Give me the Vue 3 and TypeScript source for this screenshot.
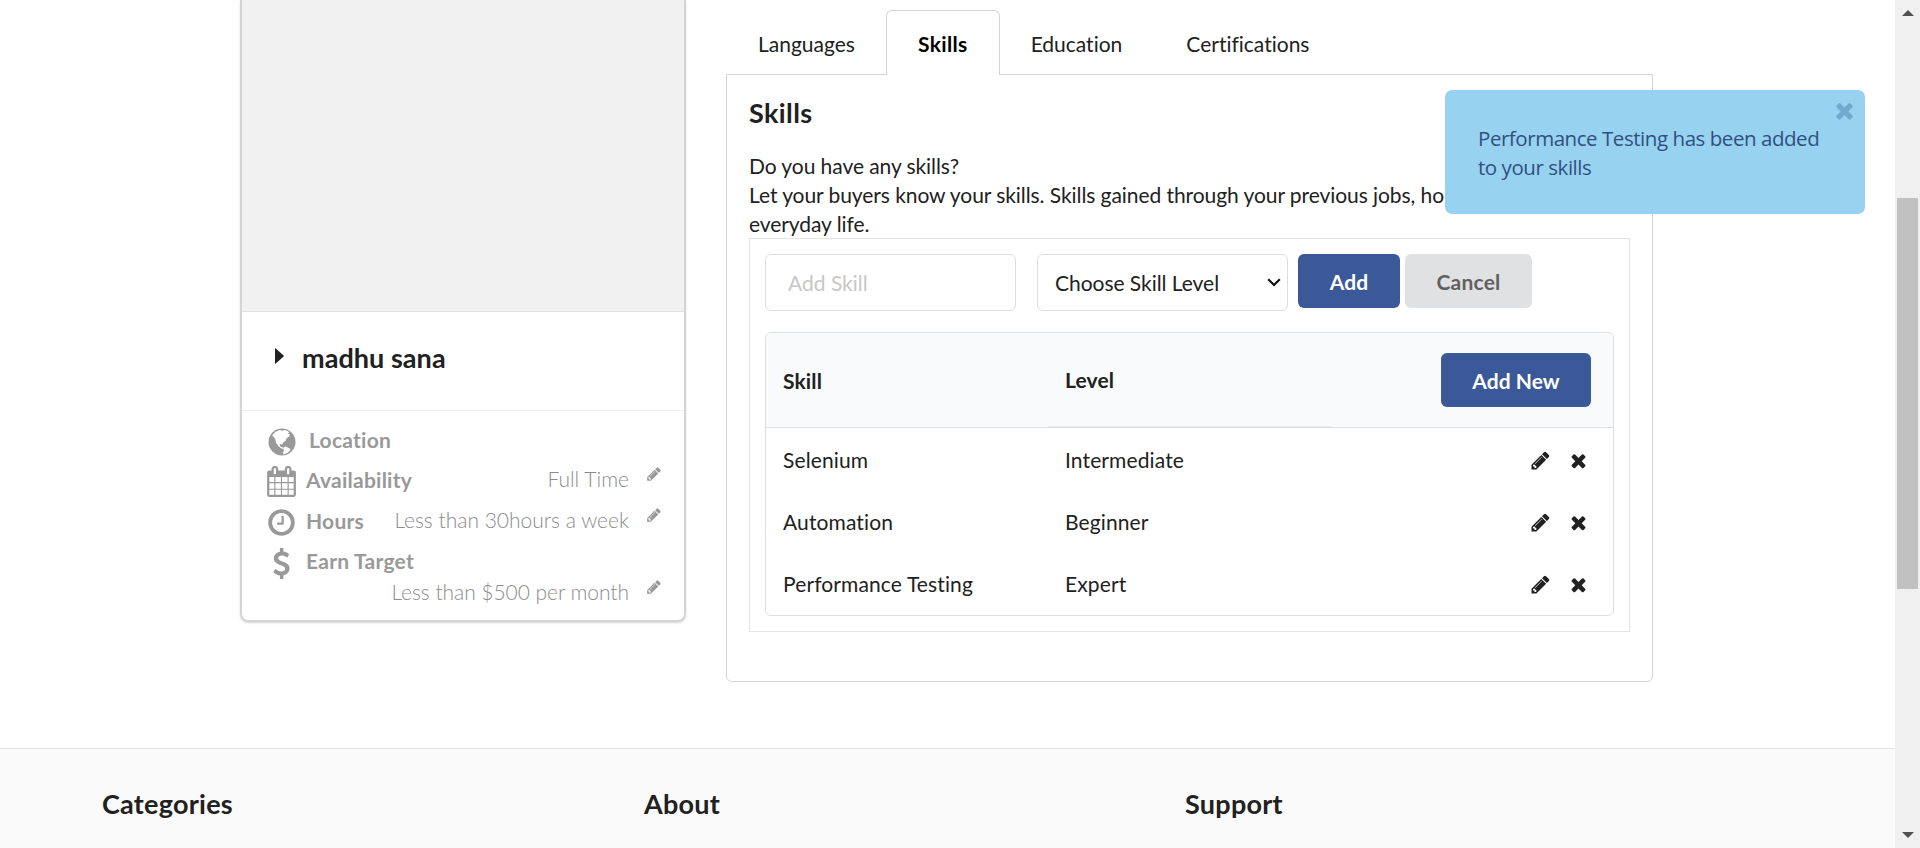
<script setup lang="ts">
import { ref } from 'vue'

interface Skill { name: string; level: string }

const ICONS = {
  pencil: 'M491 1536l91-91-235-235-91 91v107h128v128h107zm523-928q0-22-22-22-10 0-17 7l-542 542q-7 7-7 17 0 22 22 22 10 0 17-7l542-542q7-7 7-17zm-54-192l416 416-832 832h-416v-416zm683 96q0 53-37 90l-166 166-416-416 166-165q36-38 90-38 53 0 91 38l235 234q37 39 37 91z',
  close: 'M1490 1322q0 40-28 68l-136 136q-28 28-68 28t-68-28l-294-294-294 294q-28 28-68 28t-68-28l-136-136q-28-28-28-68t28-68l294-294-294-294q-28-28-28-68t28-68l136-136q28-28 68-28t68 28l294 294 294-294q28-28 68-28t68 28l136 136q28 28 28 68t-28 68l-294 294 294 294q28 28 28 68z',
  calendar: 'M192 1664h288v-288h-288v288zm352 0h320v-288h-320v288zm-352-352h288v-320h-288v320zm352 0h320v-320h-320v320zm-352-384h288v-288h-288v288zm736 736h320v-288h-320v288zm-384-736h320v-288h-320v288zm768 736h288v-288h-288v288zm-384-352h320v-320h-320v320zm-352-864v-288q0-13-9.5-22.5t-22.5-9.5h-64q-13 0-22.5 9.5t-9.5 22.5v288q0 13 9.5 22.5t22.5 9.5h64q13 0 22.5-9.5t9.5-22.5zm736 864h288v-320h-288v320zm-384-384h320v-288h-320v288zm384 0h288v-288h-288v288zm32-480v-288q0-13-9.5-22.5t-22.5-9.5h-64q-13 0-22.5 9.5t-9.5 22.5v288q0 13 9.5 22.5t22.5 9.5h64q13 0 22.5-9.5t9.5-22.5zm384-64v1280q0 52-38 90t-90 38h-1408q-52 0-90-38t-38-90v-1280q0-52 38-90t90-38h128v-96q0-66 47-113t113-47h64q66 0 113 47t47 113v96h384v-96q0-66 47-113t113-47h64q66 0 113 47t47 113v96h128q52 0 90 38t38 90z',
  clock: 'M1024 544v448q0 14-9 23t-23 9h-320q-14 0-23-9t-9-23v-64q0-14 9-23t23-9h224v-352q0-14 9-23t23-9h64q14 0 23 9t9 23zm416 352q0-148-73-273t-198-198-273-73-273 73-198 198-73 273 73 273 198 198 273 73 273-73 198-198 73-273zm224 0q0 209-103 385.5t-279.5 279.5-385.5 103-385.5-103-279.5-279.5-103-385.5 103-385.5 279.5-279.5 385.5-103 385.5 103 279.5 279.5 103 385.5z',
  dollar: 'M1362 1185q0 153-99.5 263.5t-258.5 136.5v175q0 14-9 23t-23 9h-135q-13 0-22.5-9.5t-9.5-22.5v-175q-66-9-127.5-31t-101.5-44.5-74-48-46.5-37.5-17.5-18q-17-21-2-41l103-135q7-10 23-12 15-2 24 9l2 2q113 99 243 125 37 8 74 8 81 0 142.5-43t61.5-122q0-28-15-53t-33.5-42-58.5-37.5-66-32-80-32.5q-39-16-61.5-25t-61.5-26.5-62.5-31-56.5-35.5-53.5-42.5-43.5-49-35.5-58-21-66.5-8.5-78q0-138 98-242t255-134v-180q0-13 9.5-22.5t22.5-9.5h135q14 0 23 9t9 23v176q57 6 110.5 23t87 33.5 63.5 37.5 39 29 15 14q17 18 5 38l-81 146q-8 15-23 16-14 3-27-7-3-3-14.5-12t-39-26.5-58.5-32-74.5-26-85.5-11.5q-95 0-155 43t-60 111q0 26 8.5 48t29.5 41.5 39.5 33 56 31 60.5 27 70 27.5q53 20 81 31.5t76 35 75.5 42.5 62 50 53 63.5 31.5 76.5 13 94z',
}

const tabs = ['Languages', 'Skills', 'Education', 'Certifications']
const activeTab = ref('Skills')
const newSkill = ref('')
const newLevel = ref('')
const noticeOpen = ref(true)
const skills = ref<Skill[]>([
  { name: 'Selenium', level: 'Intermediate' },
  { name: 'Automation', level: 'Beginner' },
  { name: 'Performance Testing', level: 'Expert' },
])
const levels = ['Beginner', 'Intermediate', 'Expert']
const footer = ['Categories', 'About', 'Support']

function addSkill() {
  if (newSkill.value && newLevel.value) skills.value.push({ name: newSkill.value, level: newLevel.value })
}
function removeSkill(i: number) {
  skills.value.splice(i, 1)
}
</script>

<template>
  <div class="window">
    <div class="page">
      <main class="content">
        <aside class="card">
          <div class="photo"></div>
          <div class="owner">
            <svg class="caret" viewBox="0 0 9 16"><path d="M0 0.6Q0 0 .8 .5L8.6 7.4Q9 8 8.6 8.6L.8 15.5Q0 16 0 15.4Z" /></svg>
            <span>madhu sana</span>
          </div>
          <div class="facts">
            <div class="fact location">
              <svg class="lead" viewBox="0 0 28 28">
                <circle cx="14" cy="14" r="13.5" />
                <path class="land" d="M4.2 7.2L8 3.5l4-1.4 2.6.6 1.6-.7 3 .8 2.2 1.4-1.4 1.2 2 1.2-1 2.2-2.4 1.3-.7 2.4-2.6 1.7-1.1 2.2-1.8-.5-.8 1.8 1.6 1.4 1.7.4.3 1.5-2.2-.7-2.7-2.2-2.2-3.4-.9-3.6zM15.6 19.2l2.1-.7 2.6 1.2 2.2 1.3-.6 1.5-2.2 2.2-4.3 1.7-.4-2.1 1.1-1.8-.9-1.6z" />
              </svg>
              <strong>Location</strong>
            </div>
            <div class="fact">
              <svg class="lead" viewBox="0 0 1792 1792"><path :d="ICONS.calendar" /></svg>
              <strong>Availability</strong>
              <span class="value">Full Time</span>
              <svg class="edit" viewBox="0 0 1792 1792"><path :d="ICONS.pencil" /></svg>
            </div>
            <div class="fact">
              <svg class="lead" viewBox="0 0 1792 1792"><path :d="ICONS.clock" /></svg>
              <strong>Hours</strong>
              <span class="value">Less than 30hours a week</span>
              <svg class="edit" viewBox="0 0 1792 1792"><path :d="ICONS.pencil" /></svg>
            </div>
            <div class="fact earn">
              <svg class="lead" viewBox="0 0 1792 1792"><path :d="ICONS.dollar" /></svg>
              <strong>Earn Target</strong>
            </div>
            <div class="fact target">
              <span class="value">Less than $500 per month</span>
              <svg class="edit" viewBox="0 0 1792 1792"><path :d="ICONS.pencil" /></svg>
            </div>
          </div>
        </aside>

        <section class="profile">
          <nav class="tabs">
            <a v-for="t in tabs" :key="t" :class="['tab', { active: t === activeTab }]" @click="activeTab = t">{{ t }}</a>
          </nav>
          <div class="panel">
            <h3>Skills</h3>
            <p>Do you have any skills?<br />Let your buyers know your skills. Skills gained through your previous jobs, hobbies and even everyday life.</p>
            <div class="frame">
              <div class="form">
                <input v-model="newSkill" type="text" placeholder="Add Skill" />
                <div class="choose">
                  <select v-model="newLevel">
                    <option value="">Choose Skill Level</option>
                    <option v-for="l in levels" :key="l">{{ l }}</option>
                  </select>
                  <svg viewBox="0 0 14 9"><path d="M1.2 1.2L7 7l5.8-5.8" /></svg>
                </div>
                <button class="btn add" @click="addSkill">Add</button>
                <button class="btn cancel">Cancel</button>
              </div>
              <div class="table">
                <div class="row head">
                  <span>Skill</span><span class="level">Level</span>
                  <div class="last"><button class="btn add-new">Add New</button></div>
                </div>
                <div v-for="(s, i) in skills" :key="s.name" class="row">
                  <span>{{ s.name }}</span><span>{{ s.level }}</span>
                  <div class="last actions">
                    <svg class="pen" viewBox="0 0 1792 1792"><path :d="ICONS.pencil" /></svg>
                    <svg class="del" viewBox="0 0 1792 1792" @click="removeSkill(i)"><path :d="ICONS.close" /></svg>
                  </div>
                </div>
              </div>
            </div>
          </div>
        </section>
      </main>
      <footer class="footer"><h3 v-for="f in footer" :key="f">{{ f }}</h3></footer>
    </div>
    <div class="scrollbar">
      <svg viewBox="0 0 12 6"><path d="M0 6L6 0l6 6z" /></svg>
      <div class="thumb"></div>
      <svg viewBox="0 0 12 6"><path d="M0 0l6 6 6-6z" /></svg>
    </div>
    <div v-if="noticeOpen" class="notice">
      <svg viewBox="0 0 1792 1792" @click="noticeOpen = false"><path :d="ICONS.close" /></svg>
      Performance Testing has been added to your skills
    </div>
  </div>
</template>

<style>
body { margin: 0; background: #fff; overflow: hidden; }
</style>

<style scoped>
* { box-sizing: border-box; }
.window { position: relative; display: flex; width: 1920px; height: 848px; overflow: hidden; font: 21px/29px Lato, "Open Sans", sans-serif; color: #212121; font-variant-ligatures: none; }
.page { width: 1895px; display: flex; flex-direction: column; }
.content { height: 748px; display: flex; align-items: flex-start; padding-left: 240px; }
h3 { margin: 0; font-weight: 700; letter-spacing: .25px; }
svg { fill: currentColor; flex: none; display: block; }

.card { width: 446px; height: 622px; border: 2px solid #d4d4d5; border-top: 0; border-radius: 0 0 8px 8px; box-shadow: 0 1px 2px #d4d4d5; color: #999; }
.photo { height: 312px; background: #f1f1f1; border-bottom: 1px solid #e1e1e1; }
.owner { height: 99px; border-bottom: 1px solid #efefef; display: flex; padding: 30px 0 0 33px; color: #212121; font-size: 27px; font-weight: 700; line-height: 32px; letter-spacing: .05px; }
.caret { width: 9px; height: 16px; margin: 6px 18px 0 0; }
.facts { padding: 10px 21px 0 24px; }
.fact { height: 41px; display: flex; align-items: flex-start; padding-top: 5px; }
.lead { width: 31px; height: 31px; margin: 1px 9px 0 0; }
.location { padding-top: 4px; height: 39px; }
.location .lead { width: 28px; height: 28px; margin: 3px 13px 0 2px; }
.fact strong { font-weight: 700; letter-spacing: .25px; }
.land { fill: #fff; }
.value { margin: -1px 0 0 auto; font-weight: 300; color: #8c8c8c; }
.edit { width: 16px; height: 16px; margin: 1px 1px 0 17px; }
.earn { height: 32px; }
.earn strong { margin-top: -1px; }
.target { padding-top: 4px; }
.target .value { letter-spacing: -.05px; }

.profile { width: 927px; margin-left: 40px; }
.tabs { display: flex; height: 75px; padding-top: 10px; margin-bottom: -1px; position: relative; }
.tab { padding: 19px 32px 0; height: 65px; }
.tab.active { border: 1px solid #d4d4d5; border-bottom: 0; border-radius: 6px 6px 0 0; background: #fff; color: #000; font-weight: 700; padding: 18px 31px 0; margin: 0 -1px; letter-spacing: .35px; }
.panel { height: 608px; border: 1px solid #d4d4d5; border-radius: 0 0 6px 6px; padding: 21px 22px 0; }
.panel h3 { font-size: 27px; line-height: 34px; letter-spacing: .4px; }
.panel p { margin: 21px 0 0; height: 87px; letter-spacing: -.07px; }
.frame { height: 394px; border: 1px solid #e3e4e5; padding: 15px; }
.form { display: flex; height: 78px; align-items: flex-start; }
input, select { width: 251px; height: 57px; border: 1px solid #dedede; border-radius: 6px; background: #fff; font: inherit; color: #212121; outline: 0; }
input { padding: 0 22px; margin-right: 21px; }
input::placeholder { color: #c7c7c7; opacity: 1; }
.choose { position: relative; margin-right: 10px; }
select { appearance: none; padding: 0 17px; display: block; letter-spacing: -.04px; }
.choose svg { position: absolute; right: 7px; top: 24px; width: 14px; height: 9px; fill: none; stroke: #111; stroke-width: 2.2; }
.btn { height: 54px; border: 0; border-radius: 6px; padding: 1px 0 0; background: #3b5998; color: #fff; font: 700 21px/53px Lato, sans-serif; letter-spacing: .05px; }
.add { width: 102px; margin-right: 5px; }
.cancel { width: 127px; background: #e0e1e2; color: #5f6061; letter-spacing: .2px; }
.table { height: 284px; border: 1px solid #dedfdf; border-radius: 6px; overflow: hidden; }
.row { display: grid; grid-template-columns: 282px 284px 1fr; height: 62px; align-items: center; letter-spacing: .12px; }
.row > span { padding-left: 17px; }
.head { height: 95px; background: #f9fafb; border-bottom: 1px solid #dedfdf; font-weight: 700; }
.head .level { align-self: stretch; line-height: 94px; box-shadow: inset 0 -1px #ebeced; }
.last { display: flex; justify-content: flex-end; padding-right: 22px; }
.add-new { width: 150px; }
.actions { padding: 2px 24px 0 0; }
.pen { width: 21px; height: 21px; margin-right: 17px; }
.del { width: 21px; height: 21px; }

.footer { height: 100px; background: #fafafa; border-top: 1px solid #e3e3e3; padding: 38px 0 0 102px; display: grid; grid-template-columns: 542px 541px 1fr; }
.footer h3 { font-size: 27px; line-height: 34px; }
.scrollbar { width: 25px; background: #f0f0f0; display: flex; flex-direction: column; align-items: center; justify-content: space-between; padding: 10px 0; color: #505050; }
.scrollbar svg { width: 12px; height: 6px; }
.thumb { width: 21px; height: 391px; background: #c1c1c1; margin-bottom: 61px; }
.notice { position: absolute; left: 1445px; top: 90px; width: 420px; height: 124px; border-radius: 7px; background: #98d2f1; color: #31507f; padding: 34px 30px 0 33px; font: 20.5px/29px "Open Sans", "Noto Sans", sans-serif; letter-spacing: -.45px; }
.notice svg { position: absolute; right: 8px; top: 8px; width: 25px; height: 25px; color: #6fabcd; }
</style>
